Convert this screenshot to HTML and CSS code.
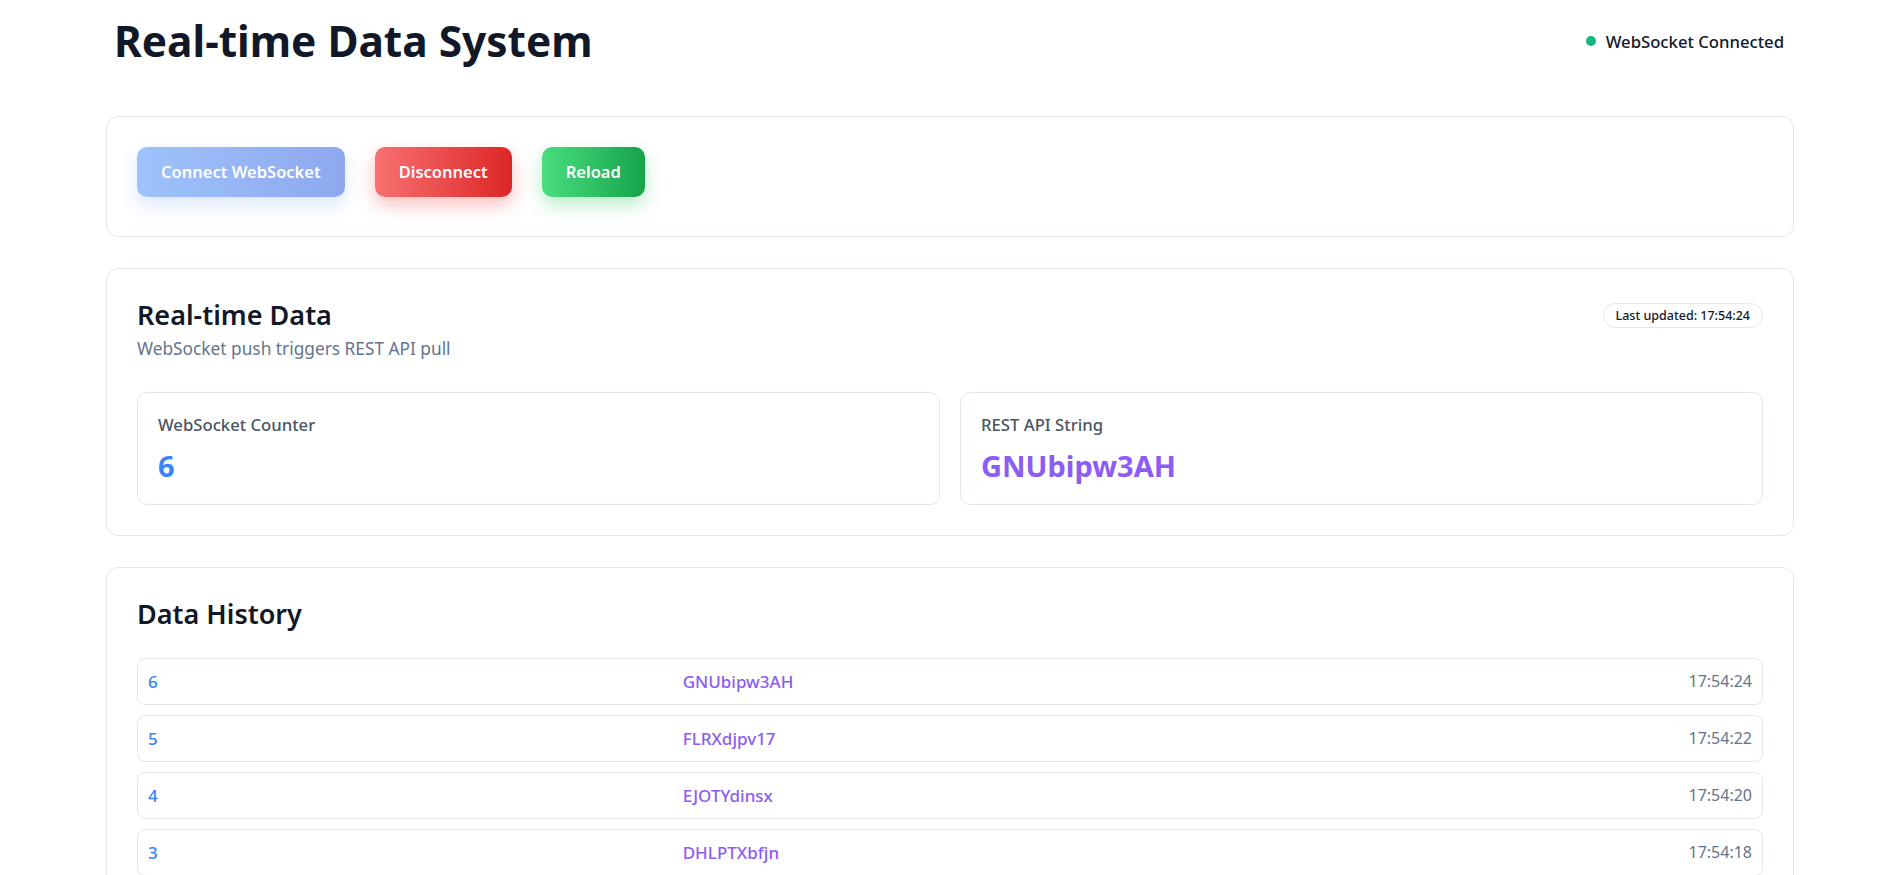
FILE: index.html
```html
<!DOCTYPE html>
<html lang="en">
<head>
<meta charset="utf-8">
<title>Real-time Data System</title>
<link rel="stylesheet" href="styles.css">
</head>
<body>
<div class="page">
  <header class="topbar">
    <h1 class="title">Real-time Data System</h1>
    <div class="status"><span class="dot"></span><span class="status-text">WebSocket Connected</span></div>
  </header>

  <section class="card controls">
    <div class="btn-row">
      <button class="btn btn-connect">Connect WebSocket</button>
      <button class="btn btn-disconnect">Disconnect</button>
      <button class="btn btn-reload">Reload</button>
    </div>
  </section>

  <section class="card">
    <div class="card-head">
      <h2 class="section-title">Real-time Data</h2>
      <span class="badge">Last updated: 17:54:24</span>
    </div>
    <p class="subtitle">WebSocket push triggers REST API pull</p>
    <div class="stats">
      <div class="stat">
        <div class="stat-label">WebSocket Counter</div>
        <div class="stat-value blue">6</div>
      </div>
      <div class="stat">
        <div class="stat-label">REST API String</div>
        <div class="stat-value purple">GNUbipw3AH</div>
      </div>
    </div>
  </section>

  <section class="card history-card">
    <h2 class="section-title history-title">Data History</h2>
    <div class="history">
      <div class="row"><span class="c-num">6</span><span class="c-str">GNUbipw3AH</span><span class="c-time">17:54:24</span></div>
      <div class="row"><span class="c-num">5</span><span class="c-str">FLRXdjpv17</span><span class="c-time">17:54:22</span></div>
      <div class="row"><span class="c-num">4</span><span class="c-str">EJOTYdinsx</span><span class="c-time">17:54:20</span></div>
      <div class="row"><span class="c-num">3</span><span class="c-str">DHLPTXbfjn</span><span class="c-time">17:54:18</span></div>
    </div>
  </section>
</div>
</body>
</html>
```

FILE: styles.css
```css
* { box-sizing: border-box; }

html, body {
  margin: 0;
  background: #ffffff;
}

body {
  font-family: "Noto Sans", "Open Sans", sans-serif;
  color: #111827;
}

.page {
  padding: 0 90px 40px 106px;
}

.topbar {
  display: flex;
  justify-content: space-between;
  align-items: center;
  padding: 16px 10px 0 8px;
  margin-bottom: 49px;
}

.title {
  margin: 0;
  font-size: 42.4px;
  line-height: 1.2;
  font-weight: 700;
  color: #111827;
}

.status {
  display: flex;
  align-items: center;
  gap: 10px;
}

.dot {
  width: 10px;
  height: 10px;
  border-radius: 50%;
  background: #10b981;
}

.status-text {
  font-size: 16.7px;
  font-weight: 500;
  color: #111827;
}

.card {
  background: #ffffff;
  border: 1px solid #e2e8f0;
  border-radius: 12px;
  padding: 30px;
  margin-bottom: 31px;
}

.controls {
  padding-bottom: 39px;
}

.btn-row {
  display: flex;
  gap: 30px;
}

.btn {
  height: 50px;
  padding: 0 24px;
  border: none;
  border-radius: 10px;
  font-family: inherit;
  font-size: 16.5px;
  font-weight: 600;
  color: #ffffff;
  cursor: pointer;
}

.btn-connect {
  background: linear-gradient(90deg, #9ec2fb, #8ea8ee);
  box-shadow: 0 8px 18px rgba(96, 140, 240, 0.22);
}

.btn-disconnect {
  background: linear-gradient(90deg, #f87171, #dc2626);
  box-shadow: 0 8px 18px rgba(239, 68, 68, 0.35);
}

.btn-reload {
  background: linear-gradient(90deg, #4ade80, #16a34a);
  box-shadow: 0 8px 18px rgba(34, 197, 94, 0.32);
}

.card-head {
  display: flex;
  justify-content: space-between;
  align-items: center;
}

.section-title {
  margin: 0;
  font-size: 27px;
  line-height: 1.2;
  font-weight: 600;
  color: #111827;
}

.badge {
  font-size: 12.5px;
  font-weight: 500;
  line-height: 19px;
  padding: 2px 12px;
  border: 1px solid #e2e8f0;
  border-radius: 999px;
  color: #111827;
}

.subtitle {
  margin: 5px 0 0;
  font-size: 17.3px;
  line-height: 1.5;
  color: #64748b;
}

.stats {
  display: grid;
  grid-template-columns: 1fr 1fr;
  gap: 20px;
  margin-top: 30px;
}

.stat {
  border: 1px solid #e2e8f0;
  border-radius: 10px;
  padding: 20px;
}

.stat-label {
  font-size: 16.7px;
  font-weight: 500;
  line-height: 24px;
  color: #4b5563;
}

.stat-value {
  margin-top: 11px;
  font-size: 29px;
  font-weight: 700;
  line-height: 36px;
}

.blue { color: #3b82f6; }
.purple { color: #8b5cf6; }

.history-card {
  margin-bottom: 0;
}

.history-title {
  margin-bottom: 27px;
}

.history {
  display: flex;
  flex-direction: column;
  gap: 10px;
}

.row {
  display: grid;
  grid-template-columns: 1fr 1fr 1fr;
  border: 1px solid #e2e8f0;
  border-radius: 8px;
  padding: 11px 10px;
  line-height: 23px;
}

.c-num {
  font-size: 17px;
  font-weight: 500;
  color: #3b82f6;
}

.c-str {
  font-size: 17px;
  font-weight: 500;
  color: #8b5cf6;
}

.c-time {
  font-size: 16px;
  text-align: right;
  color: #64748b;
}
```
